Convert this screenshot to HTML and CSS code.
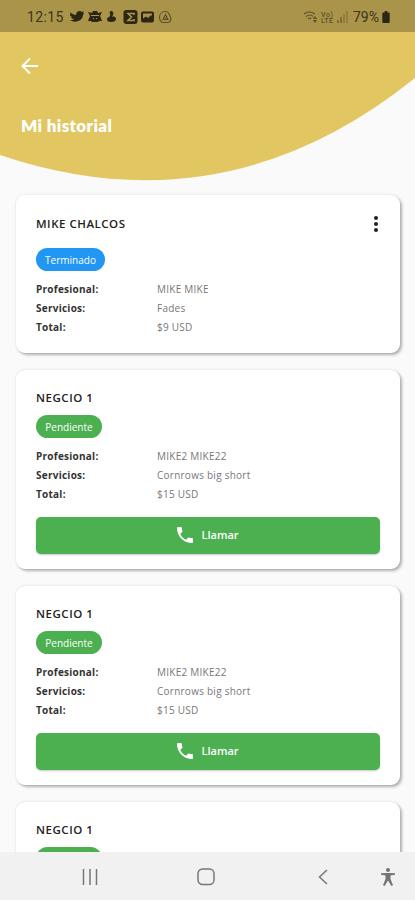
FILE: index.html
```html
<!DOCTYPE html>
<html lang="es">
<head>
<meta charset="utf-8">
<meta name="viewport" content="width=device-width, initial-scale=1">
<title>Mi historial</title>
<link rel="stylesheet" href="styles.css">
</head>
<body>
<div class="screen">
  <header class="header">
    <svg class="curve" viewBox="0 0 415 190" aria-hidden="true"><path d="M0 0H415V78Q225 231 0 155Z"/></svg>
    <div class="status">
      <span class="clock">12:15</span>
      <svg class="apps" viewBox="0 0 106 18" aria-hidden="true">
        <path d="M0 4c2 2 4 3 6 3 0-4 4-5 6-3l2-1-1 2 1 0-1 2c0 5-7 9-13 5 2 0 3 0 4-1-2 0-2-1-3-2h1C0 8 0 7 0 6h1C0 5 0 5 0 4z"/>
        <path d="M18 4l4 1 1-2h4l1 2 4-1-2 4 2 5h-3l-1 1h-6l-1-1h-3l2-5z"/><path class="cut" d="M21 7.500h8M23 10.500h1M26 10.500h1"/>
        <path d="M41 3c2 0 3 2 2 4l-1 2c2-1 4 0 4 2s-2 3-5 3-4-1-4-3c0-1 1-2 3-2l-1-1c1 0 2-1 1-2-1-2 0-3 1-3z"/>
        <rect x="53.500" y="2" width="14" height="14" rx="3"/><path class="cut thick" d="M64 7V5.500h-6l3.500 3.500-3.500 3.500h6V11"/>
        <path fill-rule="evenodd" d="M73 3.500h9q2 0 2 2v7q0 2-2 2h-9q-2 0-2-2v-7q0-2 2-2zM73 5.500v5l3-2 2 1.500 3-3 1 1V5.500z"/>
        <path class="line" d="M95.500 3.500c-4 0-6 3-6 6s2 5 4 5h4c3 0 4-3 3-5.500l-2-4q-1-1.500-3-1.500zM95.500 6.500l-2.500 5h5zM94.500 10h2"/>
      </svg>
      <span class="gap"></span>
      <svg class="signals" viewBox="0 0 48 18" aria-hidden="true">
        <path class="line" d="M1 6q5-4 11 0M3 8.500q4-3 7 0M5 11q2-2 3 0"/><path d="M12 8l2 3h-4zM10 12h4l-2 3z"/>
        <text x="18" y="8.500" textLength="12">Vo)</text><text x="18" y="15" textLength="12">LTE</text>
        <path class="bar" d="M35 12v3M38 9v6"/><path class="bar faint" d="M41 6v9M44 3v12"/>
      </svg>
      <span class="percent">79%</span>
      <svg class="battery" viewBox="0 0 8 13" aria-hidden="true"><path d="M2.500 0h3v1.500H7q1 0 1 1V12q0 1-1 1H1q-1 0-1-1V2.500q0-1 1-1h1.500z"/></svg>
    </div>
    <svg class="back" viewBox="0 0 18 18" aria-hidden="true"><path d="M17 9H2M9 1.500L1.500 9 9 16.500"/></svg>
    <h1 class="title">Mi historial</h1>
  </header>

  <main class="list">
    <article class="card done">
      <div class="top"><h2>MIKE CHALCOS</h2><svg class="more" viewBox="0 0 4 16" aria-hidden="true"><circle cx="2" cy="2" r="2"/><circle cx="2" cy="8" r="2"/><circle cx="2" cy="14" r="2"/></svg></div>
      <span class="chip blue">Terminado</span>
      <dl><dt>Profesional:</dt><dd>MIKE MIKE</dd><dt>Servicios:</dt><dd>Fades</dd><dt>Total:</dt><dd>$9 USD</dd></dl>
    </article>
    <article class="card">
      <div class="top"><h2>NEGCIO 1</h2></div>
      <span class="chip">Pendiente</span>
      <dl><dt>Profesional:</dt><dd>MIKE2 MIKE22</dd><dt>Servicios:</dt><dd>Cornrows big short</dd><dt>Total:</dt><dd>$15 USD</dd></dl>
      <button class="call"><svg viewBox="3 3 18 18" aria-hidden="true"><path d="M6.620 10.790c1.440 2.830 3.760 5.140 6.590 6.590l2.200-2.200c.27-.27.67-.36 1.020-.24 1.120.37 2.330.57 3.570.57.55 0 1 .45 1 1V20c0 .55-.45 1-1 1C10.610 21 3 13.390 3 4c0-.55.45-1 1-1h3.500c.55 0 1 .45 1 1 0 1.250.2 2.450.57 3.570.11.35.03.74-.25 1.020z"/></svg>Llamar</button>
    </article>
    <article class="card">
      <div class="top"><h2>NEGCIO 1</h2></div>
      <span class="chip">Pendiente</span>
      <dl><dt>Profesional:</dt><dd>MIKE2 MIKE22</dd><dt>Servicios:</dt><dd>Cornrows big short</dd><dt>Total:</dt><dd>$15 USD</dd></dl>
      <button class="call"><svg viewBox="3 3 18 18" aria-hidden="true"><path d="M6.620 10.790c1.440 2.830 3.760 5.140 6.590 6.590l2.200-2.200c.27-.27.67-.36 1.020-.24 1.120.37 2.330.57 3.570.57.55 0 1 .45 1 1V20c0 .55-.45 1-1 1C10.610 21 3 13.390 3 4c0-.55.45-1 1-1h3.500c.55 0 1 .45 1 1 0 1.250.2 2.450.57 3.570.11.35.03.74-.25 1.020z"/></svg>Llamar</button>
    </article>
    <article class="card">
      <div class="top"><h2>NEGCIO 1</h2></div>
      <span class="chip"></span>
    </article>
  </main>

  <nav class="nav">
    <svg class="recents" viewBox="0 0 16 16" aria-hidden="true"><path d="M1.500 0v16M8 0v16M14.500 0v16"/></svg>
    <svg class="home" viewBox="0 0 18 18" aria-hidden="true"><rect x="1" y="1" width="16" height="15.500" rx="4.500"/></svg>
    <svg class="prev" viewBox="0 0 10 16" aria-hidden="true"><path d="M9 1L1.500 8 9 15"/></svg>
    <svg class="access" viewBox="0 0 14 18" aria-hidden="true"><circle cx="7" cy="2" r="2"/><path d="M0 5.200L5 5h4l5 .2v1.600L9.500 7.500v3.500L12 17.300l-1.600.7L7 12.500 3.600 18 2 17.300 4.500 11V7.500L0 6.800z"/></svg>
  </nav>
</div>
</body>
</html>
```
FILE: styles.css
```css
* { box-sizing: border-box; }
body { margin: 0; background: #fafafa; font-family: "Open Sans", "Noto Sans", sans-serif; }
.screen { height: 900px; display: flex; flex-direction: column; overflow: hidden; }

.header { position: relative; height: 195px; flex: none; }
.curve { position: absolute; inset: 0 auto auto 0; width: 415px; height: 190px; z-index: -1; fill: #e2c661; }
.status { display: flex; align-items: center; height: 32px; padding: 2px 25px 0 27px; background: #a99449; color: #3d341b; font: 14px/20px Roboto, sans-serif; }
.clock { width: 43px; letter-spacing: 0.4px; }
.apps { width: 106px; height: 18px; fill: #2d2612; }
.gap { flex: 1; }
.signals { width: 48px; height: 18px; margin-right: 2px; fill: #5c4f29; }
.signals text { font: 500 7px Roboto, sans-serif; }
.line { fill: none; stroke: #5c4f29; stroke-width: 1.1; }
.cut { fill: none; stroke: #a99449; stroke-width: 1; }
.thick { stroke-width: 1.6; }
.bar { stroke: #65572d; stroke-width: 1.2; }
.faint { opacity: 0.55; }
.percent { width: 29px; }
.battery { width: 8px; height: 12px; fill: #2d2612; }
.back { display: block; width: 18px; height: 18px; margin: 25px 0 0 21px; fill: none; stroke: #fff; stroke-width: 2; }
.title { margin: 38px 0 0 21px; color: #fff; font: 800 17px/26px Lato, sans-serif; letter-spacing: 0.35px; }

.list { flex: 1; min-height: 0; display: flex; flex-direction: column; gap: 17px; padding: 0 15px 0 16px; }
.card { flex: none; height: 199px; padding: 19px 20px 0; border-radius: 9px; background: #fff; box-shadow: 2px 2px 3px rgb(0 0 0 / 28%), 0 0 3px rgb(0 0 0 / 10%); }
.done { height: 158px; padding-top: 20px; }
.top { display: flex; justify-content: space-between; align-items: center; height: 18px; }
h2 { margin: 0; color: #222; font-size: 11.5px; line-height: 18px; font-weight: 600; letter-spacing: 0.52px; }
.more { width: 4px; height: 16px; margin-right: 2px; fill: #222; }
.chip { display: flex; align-items: center; justify-content: center; width: 66px; height: 23px; margin-top: 8px; border-radius: 12px; background: #4caf50; color: #fff; font-size: 10px; line-height: 22px; }
.blue { width: 69px; margin-top: 15px; background: #2196f3; }
dl { display: grid; grid-template-columns: 121px 1fr; grid-auto-rows: 19.2px; margin: 8.600px 0 0; font-size: 10px; line-height: 19px; letter-spacing: 0.25px; }
dt { color: #333; font-weight: 700; }
dd { margin: 0; color: #777; }
.call { display: flex; align-items: center; justify-content: center; gap: 8px; width: 344px; height: 37px; margin-top: 12.400px; padding: 0; border: 0; border-radius: 5px; background: #4caf50; box-shadow: 0 1px 2px rgb(0 0 0 / 22%); color: #fff; font: 600 11px/20px "Open Sans", sans-serif; }
.call svg { width: 16px; height: 16px; fill: #fff; }

.nav { position: relative; flex: none; display: flex; align-items: center; height: 48px; padding: 1px 20px 0 82px; background: #f1f1f1; fill: none; stroke: #777; stroke-width: 1.5; }
.recents { width: 16px; height: 16px; }
.home { width: 18px; height: 18px; margin-left: 99px; }
.prev { width: 10px; height: 16px; margin-left: 103px; }
.access { width: 14px; height: 18px; margin-left: 53px; fill: #747474; stroke: none; }
```
